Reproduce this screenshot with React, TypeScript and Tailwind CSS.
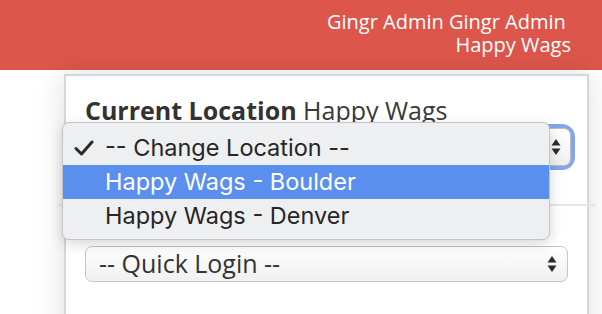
import React from 'react';

const openSans = { fontFamily: '"Open Sans", "Liberation Sans", sans-serif' };

const Arrows: React.FC = () => (
  <svg width="10" height="18" viewBox="0 0 10 18" className="shrink-0">
    <path d="M5 1 L9.5 7.5 L0.5 7.5 Z" fill="#2b2b2b" />
    <path d="M5 17 L9.5 10.5 L0.5 10.5 Z" fill="#2b2b2b" />
  </svg>
);

const Check: React.FC = () => (
  <svg width="20" height="16" viewBox="0 0 20 16">
    <path d="M2 8.5 L7.5 14 L18 2" fill="none" stroke="#2a2a2a" strokeWidth="3" strokeLinecap="round" strokeLinejoin="round" />
  </svg>
);

const LocationMenu: React.FC = () => {
  const options = ['-- Change Location --', 'Happy Wags - Boulder', 'Happy Wags - Denver'];
  return (
    <div
      className="absolute left-[62px] top-[122px] w-[488px] rounded-[7px] border border-[#c4c4c6] bg-[#eeeff1] pt-[8px] pb-[6px] shadow-[0_4px_14px_rgba(0,0,0,0.16)]"
      style={{ fontFamily: 'Inter, "Liberation Sans", sans-serif' }}
    >
      {options.map((opt, i) => (
        <div
          key={opt}
          className={`flex h-[34px] items-center text-[23.5px] ${
            i === 1 ? 'bg-[#5a8fed] text-white' : 'text-[#262626]'
          }`}
        >
          <div className="flex w-[42px] justify-end pr-[11px]">{i === 0 && <Check />}</div>
          <span>{opt}</span>
        </div>
      ))}
    </div>
  );
};

const App: React.FC = () => {
  return (
    <div className="relative h-[314px] w-[602px] overflow-hidden bg-white" style={openSans}>
      <div className="flex h-[70px] flex-col items-end bg-[#dd564b] pr-[31px] pt-[10px] text-[20px] leading-[23px] text-white">
        <span>Gingr Admin Gingr Admin&nbsp;</span>
        <span>Happy Wags</span>
      </div>

      <div className="pl-[64px] pr-[13px] pt-[4px]">
        <div className="h-[300px] border-2 border-[#d6d6d6] bg-white px-[19px] pt-[18px] shadow-[0_0_28px_rgba(0,0,0,0.13)]">
          <div className="text-[25px] leading-[32px] text-[#3a3a3a]">
            <span className="font-bold text-[#333]">Current Location</span> Happy Wags
          </div>

          <div className="-mr-[3px] mt-[2px] rounded-[9px] ring-[4px] ring-[#7fa6ee]">
            <div className="flex h-[38px] items-center justify-between rounded-[7px] border border-[#bdbdbd] bg-gradient-to-b from-white to-[#efefef] pl-[13px] pr-[9px] text-[25px] text-[#333]">
              <span>-- Change Location --</span>
              <Arrows />
            </div>
          </div>

          <div className="-mx-[28px] mt-[38px] h-[2px] bg-[#e6e6e6]" />

          <div className="mt-[40px] flex h-[36px] items-center justify-between rounded-[7px] border border-[#c6c6c6] bg-gradient-to-b from-white to-[#f0f0f0] pl-[13px] pr-[10px] text-[25px] text-[#333]">
            <span>-- Quick Login --</span>
            <Arrows />
          </div>
        </div>
      </div>

      <LocationMenu />
    </div>
  );
};

export default App;
